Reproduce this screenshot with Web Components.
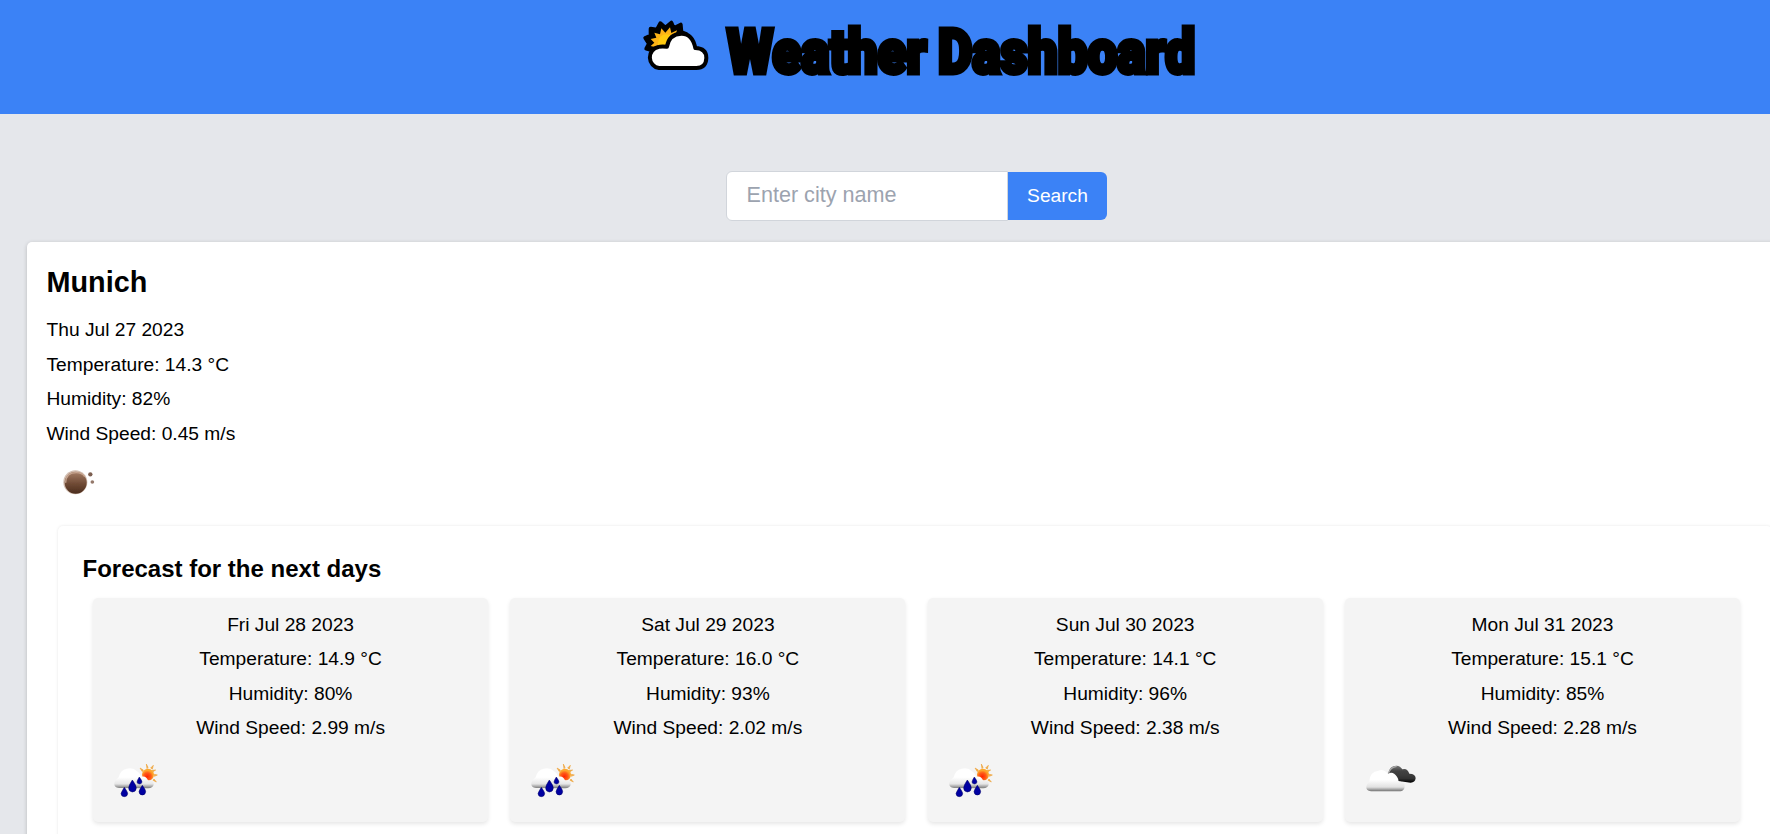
<!DOCTYPE html>
<html lang="en">
<head>
<meta charset="utf-8">
<title>Weather Dashboard</title>
<style>
html,body{margin:0;height:100%;overflow:hidden}
body{background:#e5e7eb;font-family:"Liberation Sans",Arial,sans-serif;font-size:19.2px;line-height:28.8px;color:#000}
</style>
</head>
<body>
<weather-app></weather-app>
<script>
const define = (name, html, init) => customElements.define(name, class extends HTMLElement {
  constructor() {
    super();
    const t = document.createElement('template');
    t.innerHTML = html;
    this.attachShadow({mode: 'open'}).append(t.content.cloneNode(true));
  }
  connectedCallback() { if (init) init(this, this.shadowRoot); }
});

const icons = {
  logo: `<svg width="90" height="70" viewBox="0 0 270 210">
    <path d="M52 121 L34 116 L42 101 L31 84 L47 77 L47 56 L66 59 L76 40 L91 53 L109 38 L116 55 L137 44 L139 66 L154 72 L120 120 Z" fill="#000" stroke="#000" stroke-width="12" stroke-linejoin="round"/>
    <path d="M62 112 L47 108 L58 98 L47 87 L64 83 L58 68 L75 73 L79 55 L91 68 L105 52 L109 69 L126 61 L121 76 L135 77 L100 113 Z" fill="#fcb316"/>
    <circle cx="94" cy="98" r="25" fill="#ffca10"/>
    <path d="M72 174 A32 32 0 0 1 70 111 Q78 108 96 110 Q102 72 139 71 Q172 70 181 114 Q214 115 214 144 Q213 174 184 174 Z" fill="#fff" stroke="#000" stroke-width="12" stroke-linejoin="round"/></svg>`,
  moon: `<svg width="60" height="50" viewBox="0 0 180 150"><defs>
    <linearGradient id="m" x1="0" y1="0" x2="0" y2="1"><stop offset="0" stop-color="#a57e67"/><stop offset=".55" stop-color="#704b35"/><stop offset="1" stop-color="#4b2d1d"/></linearGradient>
    <filter id="f"><feGaussianBlur stdDeviation="1.6"/></filter></defs><g filter="url(#f)">
    <circle cx="76" cy="82" r="36" fill="#d2bdb0"/><circle cx="77" cy="83" r="33" fill="url(#m)"/>
    <path d="M47 83 Q48 53 79 53 Q96 53 104 65" fill="none" stroke="#c7a590" stroke-width="4"/>
    <circle cx="121" cy="58" r="6.5" fill="#7c5f51"/><circle cx="127" cy="81" r="5.5" fill="#94786a"/></g></svg>`,
  rain: `<svg width="80" height="70" viewBox="0 0 240 210"><defs>
    <linearGradient id="c" x1="0" y1="0" x2="0" y2="1"><stop offset=".45" stop-color="#fff"/><stop offset=".78" stop-color="#e6e6e6"/><stop offset="1" stop-color="#777"/></linearGradient>
    <radialGradient id="s" cx=".45" cy=".65"><stop offset="0" stop-color="#ff2600"/><stop offset=".6" stop-color="#ff5a18"/><stop offset="1" stop-color="#fda62b"/></radialGradient>
    <filter id="f"><feGaussianBlur stdDeviation="1.6"/></filter></defs><g filter="url(#f)">
    <path d="M139 54 L144 64 L141 68 Z M160 58 L157 69 L152 66 Z M120 66 L130 72 L127 77 Z M172 87 L163 91 L163 85 Z M167 72 L159 77 L156 73 Z M169 108 L159 103 L162 99 Z" fill="#efa743" stroke="#efa743" stroke-width="2"/>
    <circle cx="144" cy="86" r="18" fill="url(#s)"/>
    <path d="M57 126 Q41 124 43 111 Q45 101 56 94 Q61 71 80 68 Q99 63 111 76 Q118 79 124 92 Q138 88 144 103 Q163 103 161 116 Q158 126 145 127 Z" fill="url(#c)"/>
    <g fill="#0505a2" stroke="#020262" stroke-width="1.5"><path d="M97 102 Q109 118 109 126 Q108 138 97 138 Q86 137 86 126 Q86 118 97 102Z"/><path d="M118 93 Q126 104 126 108 Q125 114 118 114 Q111 113 111 108 Q111 104 118 93Z"/><path d="M73 124 Q83 138 83 143 Q82 152 73 152 Q64 152 63 143 Q64 138 73 124Z"/><path d="M127 118 Q137 131 137 137 Q136 147 127 147 Q118 147 117 137 Q118 131 127 118Z"/></g>
    </g></svg>`,
  clouds: `<svg width="90" height="70" viewBox="0 0 270 210"><defs>
    <linearGradient id="c" x1="0" y1="0" x2="0" y2="1"><stop offset=".45" stop-color="#fff"/><stop offset=".8" stop-color="#e1e1e1"/><stop offset="1" stop-color="#707070"/></linearGradient>
    <linearGradient id="d" x1="0" y1="0" x2="0" y2="1"><stop offset="0" stop-color="#777"/><stop offset=".3" stop-color="#454545"/><stop offset=".75" stop-color="#333"/><stop offset="1" stop-color="#000"/></linearGradient>
    <filter id="f"><feGaussianBlur stdDeviation="1.7"/></filter></defs><g filter="url(#f)">
    <path d="M108 84 Q113 58 134 59 Q145 60 151 70 Q166 65 172 83 Q191 83 191 97 Q189 110 176 110 L139 105 Z" fill="url(#d)"/>
    <path d="M109 83 Q115 63 134 61" fill="none" stroke="#aaa" stroke-width="4"/>
    <path d="M57 136 Q41 134 43 121 Q46 113 52 105 Q54 77 79 74 Q95 68 108 84 Q122 74 135 92 Q140 99 140 107 Q159 106 158 123 Q156 135 145 136 Z" fill="url(#c)"/></g></svg>`
};

define('weather-icon', `<style>:host{display:block;line-height:0}svg{display:block}</style>`,
  (el, r) => r.append(document.createRange().createContextualFragment(icons[el.getAttribute('name')])));

define('app-header', `<style>
  :host{display:flex;justify-content:center;box-sizing:border-box;height:114px;padding:10px 0 0 60px;background:#3b82f6}
  .title{display:block;width:480px;height:80px;margin-right:-10px;overflow:visible}
  text{font-family:Roboto,"Liberation Sans",sans-serif;font-weight:900;font-size:61px;word-spacing:-2px;fill:#000;stroke:#000;stroke-width:5px;stroke-linejoin:miter;stroke-miterlimit:2}
  </style><weather-icon name="logo"></weather-icon>
  <svg class="title" viewBox="0 0 480 80"><text x="2" y="62.7" textLength="468" lengthAdjust="spacingAndGlyphs">Weather Dashboard</text></svg>`);

define('search-bar', `<style>
  :host{display:flex;justify-content:center;align-items:center;margin:57px 0 21px 63px}
  input{box-sizing:border-box;width:282px;height:50px;margin:0;padding:0 20px 3px 19.5px;border:1px solid #d1d5db;border-radius:6px 0 0 6px;background:#fff;font:21.6px "Liberation Sans",Arial,sans-serif;outline:0}
  input::placeholder{color:#9ca3af;opacity:1}
  button{width:99px;height:48px;border:0;padding:0;border-radius:0 6px 6px 0;background:#3b82f6;color:#fff;font:19.2px "Liberation Sans",Arial,sans-serif}
  </style><input placeholder="Enter city name"><button>Search</button>`);

define('weather-readings', `<style>:host{display:block}p{margin:0 0 5.8px}</style>
  <p id="d"></p><p id="t"></p><p id="h"></p><p id="w"></p>`, (el, r) => {
  const a = n => el.getAttribute(n), set = (id, s) => r.getElementById(id).textContent = s;
  set('d', a('date'));
  set('t', `Temperature: ${a('temp')} °C`);
  set('h', `Humidity: ${a('humidity')}%`);
  set('w', `Wind Speed: ${a('wind')} m/s`);
});

define('city-card', `<style>
  :host{display:block;box-sizing:border-box;width:1780px;height:700px;margin-left:27px;padding:20.6px 19.5px;background:#fff;border-radius:5px;box-shadow:0 1px 4px rgba(0,0,0,.2)}
  h2{margin:0 0 15.2px;font-size:28.8px;line-height:38.4px}
  </style><h2><slot name="city"></slot></h2><slot></slot>`);

define('forecast-panel', `<style>
  :host{display:block;box-sizing:border-box;width:1714px;height:400px;margin:21.9px 0 0 11px;padding:25.5px 25px;border-radius:5px;background:#fff;box-shadow:0 0 3px rgba(0,0,0,.1)}
  h3{margin:0 0 12.7px;font-size:24px;line-height:33.6px}
  div{display:grid;grid-template-columns:repeat(4,395px);gap:22.3px;margin-left:10.6px}
  </style><h3><slot name="heading"></slot></h3><div><slot></slot></div>`);

const days = [
  ['Fri Jul 28 2023', '14.9', '80', '2.99', 'rain'],
  ['Sat Jul 29 2023', '16.0', '93', '2.02', 'rain'],
  ['Sun Jul 30 2023', '14.1', '96', '2.38', 'rain'],
  ['Mon Jul 31 2023', '15.1', '85', '2.28', 'clouds']
];

define('day-card', `<style>
  :host{display:block;box-sizing:border-box;height:224px;padding-top:12.3px;border-radius:5px;background:#f4f4f4;box-shadow:0 2px 4px rgba(0,0,0,.1);text-align:center}
  ::slotted(weather-icon){margin:-3.3px 0 0 6.9px}
  </style><slot></slot>`);

define('weather-app', `<style>:host{display:block;height:100vh;overflow:hidden}.now{margin:1.7px 0 0 3px}</style>
  <app-header></app-header><search-bar></search-bar>
  <city-card><span slot="city">Munich</span>
    <weather-readings date="Thu Jul 27 2023" temp="14.3" humidity="82" wind="0.45"></weather-readings>
    <weather-icon class="now" name="moon"></weather-icon>
    <forecast-panel><span slot="heading">Forecast for the next days</span>
      ${days.map(([d, t, h, w, i]) => `<day-card><weather-readings date="${d}" temp="${t}" humidity="${h}" wind="${w}"></weather-readings><weather-icon name="${i}"></weather-icon></day-card>`).join('')}
    </forecast-panel>
  </city-card>`);
</script>
</body>
</html>
